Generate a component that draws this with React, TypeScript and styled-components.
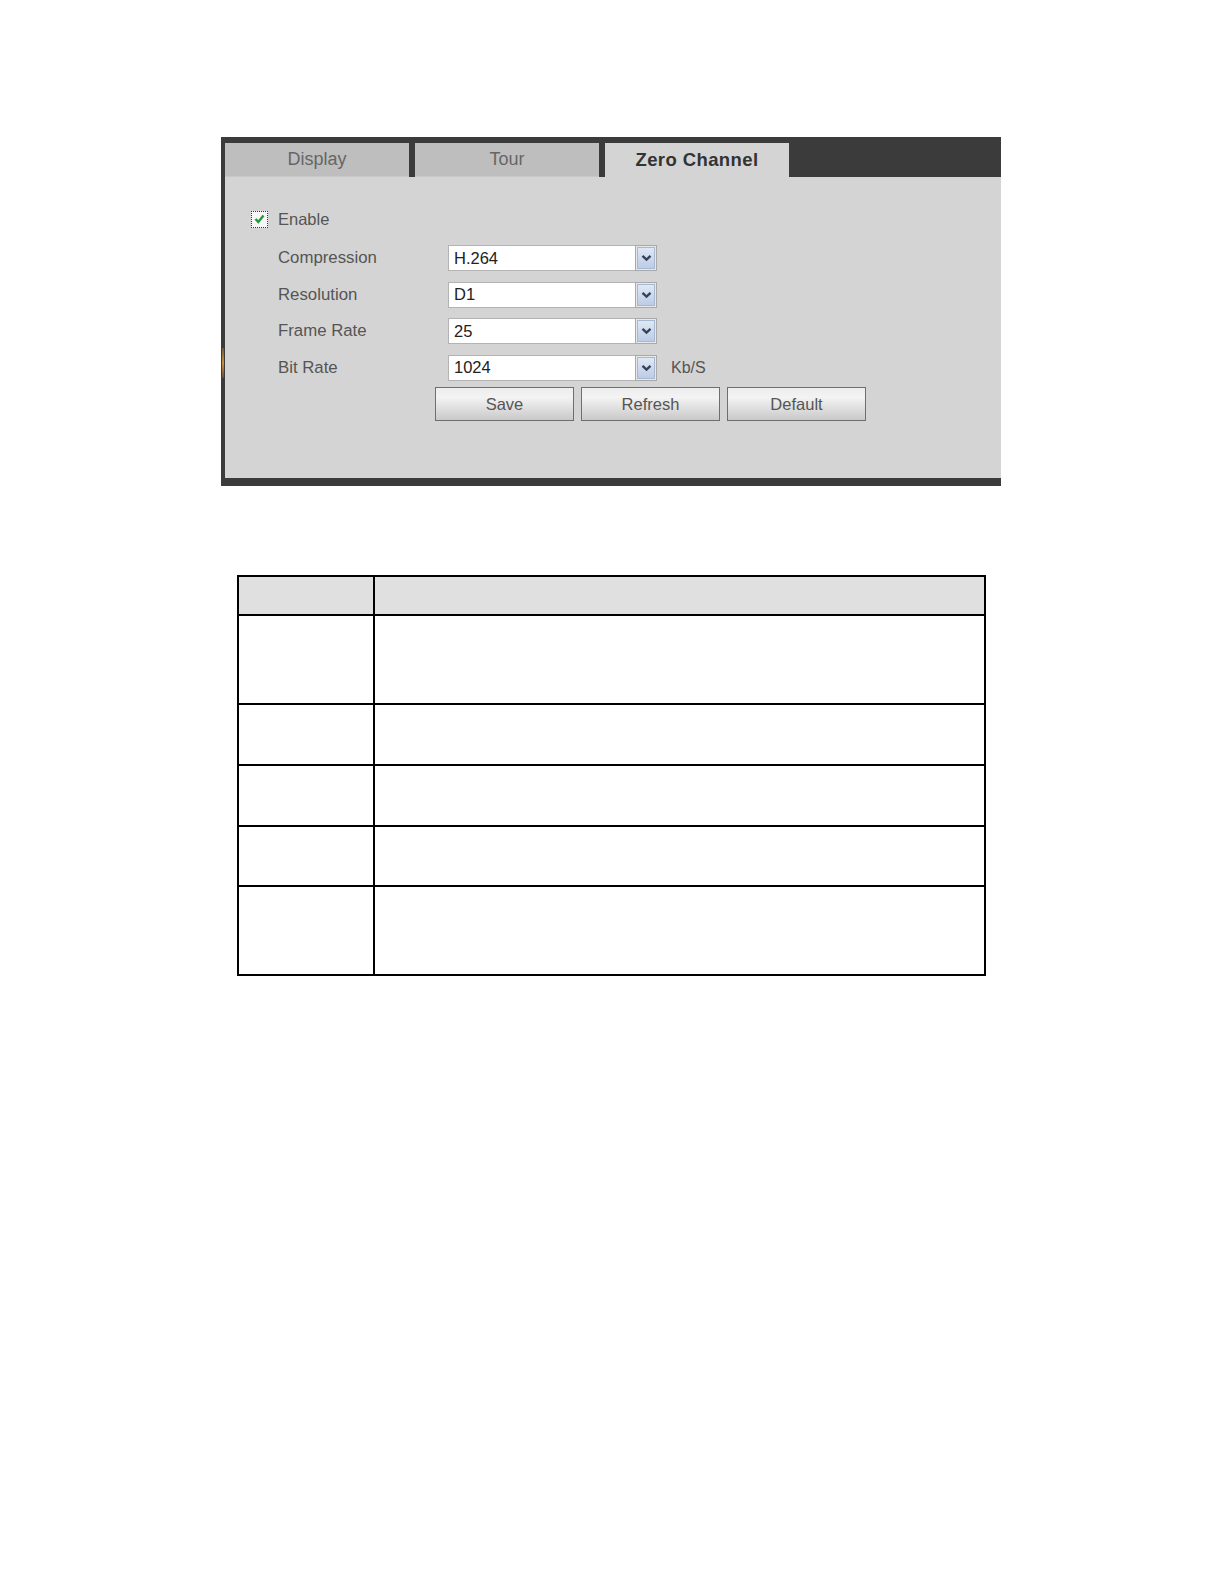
import React from "react";
import styled, { createGlobalStyle } from "styled-components";

const Global = createGlobalStyle`
  html, body { margin: 0; padding: 0; background: #fff; overflow: hidden; }
  body { font-family: "Liberation Sans", Arial, sans-serif; }
`;

const Page = styled.div`
  background: #fff;
  padding: 137px 0 0;
`;

const Panel = styled.div`
  position: relative;
  margin-left: 221px;
  width: 780px;
  height: 349px;
  box-sizing: border-box;
  background: #3b3b3b;
  padding: 6px 0 8px 4px;
  display: flex;
  flex-direction: column;

  &::before {
    content: "";
    position: absolute;
    left: 1px;
    top: 211px;
    width: 2px;
    height: 30px;
    background: linear-gradient(#6b5a3a, #c9903a 50%, #6b4a3a);
  }
`;

const TabBar = styled.div`
  display: flex;
  gap: 6px;
  height: 34px;
`;

const Tab = styled.div<{ $active?: boolean; $w: number }>`
  width: ${(p) => p.$w}px;
  height: 34px;
  display: flex;
  align-items: center;
  justify-content: center;
  font-size: ${(p) => (p.$active ? 18.5 : 18)}px;
  color: ${(p) => (p.$active ? "#333" : "#666")};
  font-weight: ${(p) => (p.$active ? "bold" : "normal")};
  background: ${(p) => (p.$active ? "#d4d4d4" : "#bebebe")};
  letter-spacing: ${(p) => (p.$active ? "0.4px" : "0")};
  padding-bottom: 1px;
  box-sizing: border-box;
  border-bottom: ${(p) => (p.$active ? "none" : "1px solid #c8c8c8")};
`;

const Body = styled.div`
  flex: 1;
  background: #d4d4d4;
  padding: 33px 0 0 26px;
  box-sizing: border-box;
`;

const EnableRow = styled.div`
  display: flex;
  align-items: center;
  gap: 10px;
  height: 18px;
  margin-bottom: 17px;
`;

const CheckBox = styled.div`
  width: 17px;
  height: 17px;
  box-sizing: border-box;
  border: 1px dotted #333;
  background: #f6f6f6;
  display: flex;
  align-items: center;
  justify-content: center;
`;

const Text = styled.span`
  font-size: 16.5px;
  color: #555;
`;

const FieldRow = styled.div`
  display: flex;
  align-items: center;
  height: 26px;
  margin-bottom: 10.5px;
  padding-left: 27px;
`;

const Label = styled.span`
  width: 170px;
  font-size: 16.8px;
  color: #555;
`;

const Select = styled.div`
  width: 209px;
  height: 26px;
  box-sizing: border-box;
  display: flex;
  align-items: stretch;
`;

const SelectField = styled.div`
  flex: 1;
  border: 1px solid #b3b3b3;
  border-right: none;
  background: #fff;
  display: flex;
  align-items: center;
  padding-left: 5px;
`;

const SelectValue = styled.span`
  font-size: 16.5px;
  color: #222;
`;

const Arrow = styled.div`
  width: 22px;
  box-sizing: border-box;
  border: 1px solid #a9a9a9;
  background: #e8e8e8;
  padding: 1px;
  display: flex;
`;

const ArrowInner = styled.div`
  flex: 1;
  border: 1px solid #a7b8d2;
  background: linear-gradient(#dfe8f5, #bccce6);
  display: flex;
  align-items: center;
  justify-content: center;
`;

const Unit = styled.span`
  margin-left: 14px;
  font-size: 16px;
  color: #555;
`;

const ButtonRow = styled.div`
  display: flex;
  gap: 7px;
  padding-left: 184px;
  margin-top: -4px;
`;

const Button = styled.div`
  width: 139px;
  height: 34px;
  box-sizing: border-box;
  border: 1px solid #6e6e6e;
  background: linear-gradient(#ededed 0%, #f3f3f3 30%, #dedede 65%, #c9c9c9 100%);
  display: flex;
  align-items: center;
  justify-content: center;
  font-size: 16.5px;
  color: #555;
`;

const Table = styled.table`
  margin: 89px 0 0 237px;
  width: 749px;
  border-collapse: collapse;
  border: 2px solid #000;
`;

const HeadCell = styled.td<{ $w?: number }>`
  border: 2px solid #000;
  background: #e0e0e0;
  height: 37px;
  width: ${(p) => (p.$w ? `${p.$w}px` : "auto")};
  padding: 0;
`;

const Cell = styled.td<{ $h: number }>`
  border: 2px solid #000;
  height: ${(p) => p.$h}px;
  padding: 0;
`;

const ArrowIcon = () => (
  <svg width="11" height="8" viewBox="0 0 11 8">
    <path d="M1.5 1.8 L5.5 5.6 L9.5 1.8" fill="none" stroke="#354259" strokeWidth="2.4" />
  </svg>
);

const CheckIcon = () => (
  <svg width="11" height="10" viewBox="0 0 11 10">
    <path d="M1.5 5 L4.3 8 L9.5 1.5" fill="none" stroke="#1f9a3a" strokeWidth="2.4" />
  </svg>
);

const fields = [
  { label: "Compression", value: "H.264" },
  { label: "Resolution", value: "D1" },
  { label: "Frame Rate", value: "25" },
  { label: "Bit Rate", value: "1024", unit: "Kb/S" },
];

const rows = [87, 59, 59, 58, 87];

export default function App() {
  return (
    <>
      <Global />
      <Page>
        <Panel>
          <TabBar>
            <Tab $w={184}>Display</Tab>
            <Tab $w={184}>Tour</Tab>
            <Tab $w={184} $active>
              Zero Channel
            </Tab>
          </TabBar>
          <Body>
            <EnableRow>
              <CheckBox>
                <CheckIcon />
              </CheckBox>
              <Text>Enable</Text>
            </EnableRow>
            {fields.map((f) => (
              <FieldRow key={f.label}>
                <Label>{f.label}</Label>
                <Select>
                  <SelectField>
                    <SelectValue>{f.value}</SelectValue>
                  </SelectField>
                  <Arrow>
                    <ArrowInner>
                      <ArrowIcon />
                    </ArrowInner>
                  </Arrow>
                </Select>
                {f.unit && <Unit>{f.unit}</Unit>}
              </FieldRow>
            ))}
            <ButtonRow>
              <Button>Save</Button>
              <Button>Refresh</Button>
              <Button>Default</Button>
            </ButtonRow>
          </Body>
        </Panel>
        <Table>
          <tbody>
            <tr>
              <HeadCell $w={134} />
              <HeadCell />
            </tr>
            {rows.map((h, i) => (
              <tr key={i}>
                <Cell $h={h} />
                <Cell $h={h} />
              </tr>
            ))}
          </tbody>
        </Table>
      </Page>
    </>
  );
}
